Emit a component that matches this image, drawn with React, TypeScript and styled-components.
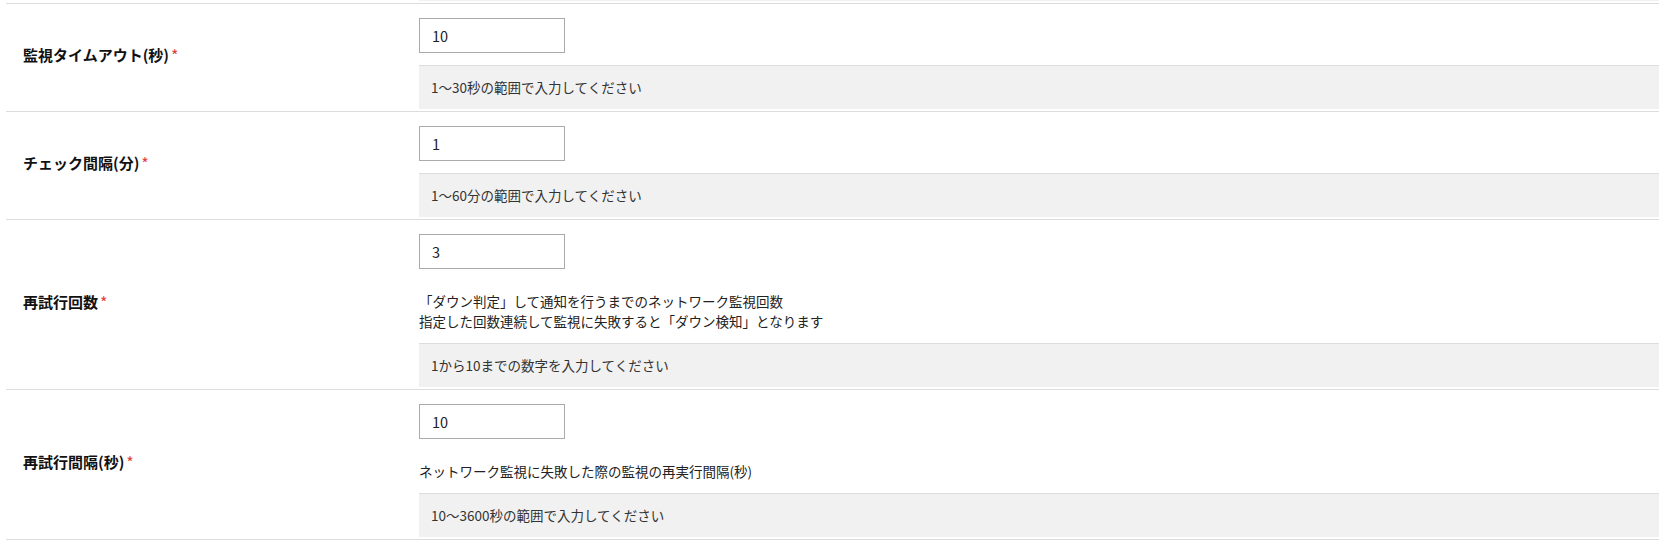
import styled, { createGlobalStyle } from 'styled-components';

const GlobalStyle = createGlobalStyle`
  html, body {
    margin: 0;
    padding: 0;
    background: #ffffff;
  }

  body {
    font-family: "Noto Sans CJK JP", "Noto Sans", sans-serif;
    color: #222222;
  }
`;

const colors = {
  line: '#dddddd',
  helpBg: '#f1f1f1',
  inputBorder: '#aaaaaa',
  required: '#e0403c',
  label: '#111111',
  text: '#222222',
};

const StyledPage = styled.div`
  padding: 0 12px 0 6px;
`;

const StyledTable = styled.div`
  display: flex;
  flex-direction: column;
`;

const StyledTail = styled.div`
  display: grid;
  grid-template-columns: 413px 1fr;
  padding-bottom: 2px;
  border-bottom: 1px solid ${colors.line};
`;

const StyledTailStrip = styled.div`
  grid-column: 2;
  height: 1px;
  background-color: ${colors.helpBg};
`;

const StyledRow = styled.div`
  display: grid;
  grid-template-columns: 413px 1fr;
  border-bottom: 1px solid ${colors.line};
`;

const StyledLabel = styled.div`
  display: flex;
  align-items: center;
  gap: 2px;
  padding: 0 0 6px 17px;

  font-size: 15px;
  font-weight: bold;
  color: ${colors.label};
`;

const StyledRequired = styled.span`
  font-size: 16px;
  font-weight: normal;
  color: ${colors.required};
`;

const StyledField = styled.div`
  display: flex;
  flex-direction: column;
  align-items: flex-start;
  padding: 14px 0 2px;
`;

const StyledInput = styled.input`
  box-sizing: border-box;
  width: 146px;
  height: 35px;
  margin: 0 0 12px;
  padding: 0 12px;

  border: 1px solid ${colors.inputBorder};
  border-radius: 0;
  outline: none;

  font-family: "Noto Sans CJK JP", "Noto Sans", sans-serif;
  font-size: 14.5px;
  color: ${colors.text};
`;

const StyledDescription = styled.div`
  margin: 10px 0 12px;

  font-size: 13.5px;
  line-height: 20px;
  color: ${colors.text};
`;

const StyledHelp = styled.div`
  box-sizing: border-box;
  align-self: stretch;
  height: 44px;
  padding: 12px 12px 0;

  border-top: 1px solid ${colors.line};
  background-color: ${colors.helpBg};

  font-size: 13.5px;
  line-height: 19px;
  color: #333333;
`;

interface FieldRowProps {
  label: string;
  value: string;
  description?: string[];
  help: string;
}

const FieldRow = ({ label, value, description, help }: FieldRowProps): JSX.Element => (
  <StyledRow>
    <StyledLabel>
      {label}
      <StyledRequired>*</StyledRequired>
    </StyledLabel>
    <StyledField>
      <StyledInput type="text" defaultValue={value} />
      {description && (
        <StyledDescription>
          {description.map((line) => (
            <div key={line}>{line}</div>
          ))}
        </StyledDescription>
      )}
      <StyledHelp>{help}</StyledHelp>
    </StyledField>
  </StyledRow>
);

const rows: FieldRowProps[] = [
  { label: '監視タイムアウト(秒)', value: '10', help: '1〜30秒の範囲で入力してください' },
  { label: 'チェック間隔(分)', value: '1', help: '1〜60分の範囲で入力してください' },
  {
    label: '再試行回数',
    value: '3',
    description: [
      '「ダウン判定」して通知を行うまでのネットワーク監視回数',
      '指定した回数連続して監視に失敗すると「ダウン検知」となります',
    ],
    help: '1から10までの数字を入力してください',
  },
  {
    label: '再試行間隔(秒)',
    value: '10',
    description: ['ネットワーク監視に失敗した際の監視の再実行間隔(秒)'],
    help: '10〜3600秒の範囲で入力してください',
  },
];

const App = (): JSX.Element => (
  <>
    <GlobalStyle />
    <StyledPage>
      <StyledTable>
        <StyledTail>
          <StyledTailStrip />
        </StyledTail>
        {rows.map((row) => (
          <FieldRow key={row.label} {...row} />
        ))}
      </StyledTable>
    </StyledPage>
  </>
);

export default App;
